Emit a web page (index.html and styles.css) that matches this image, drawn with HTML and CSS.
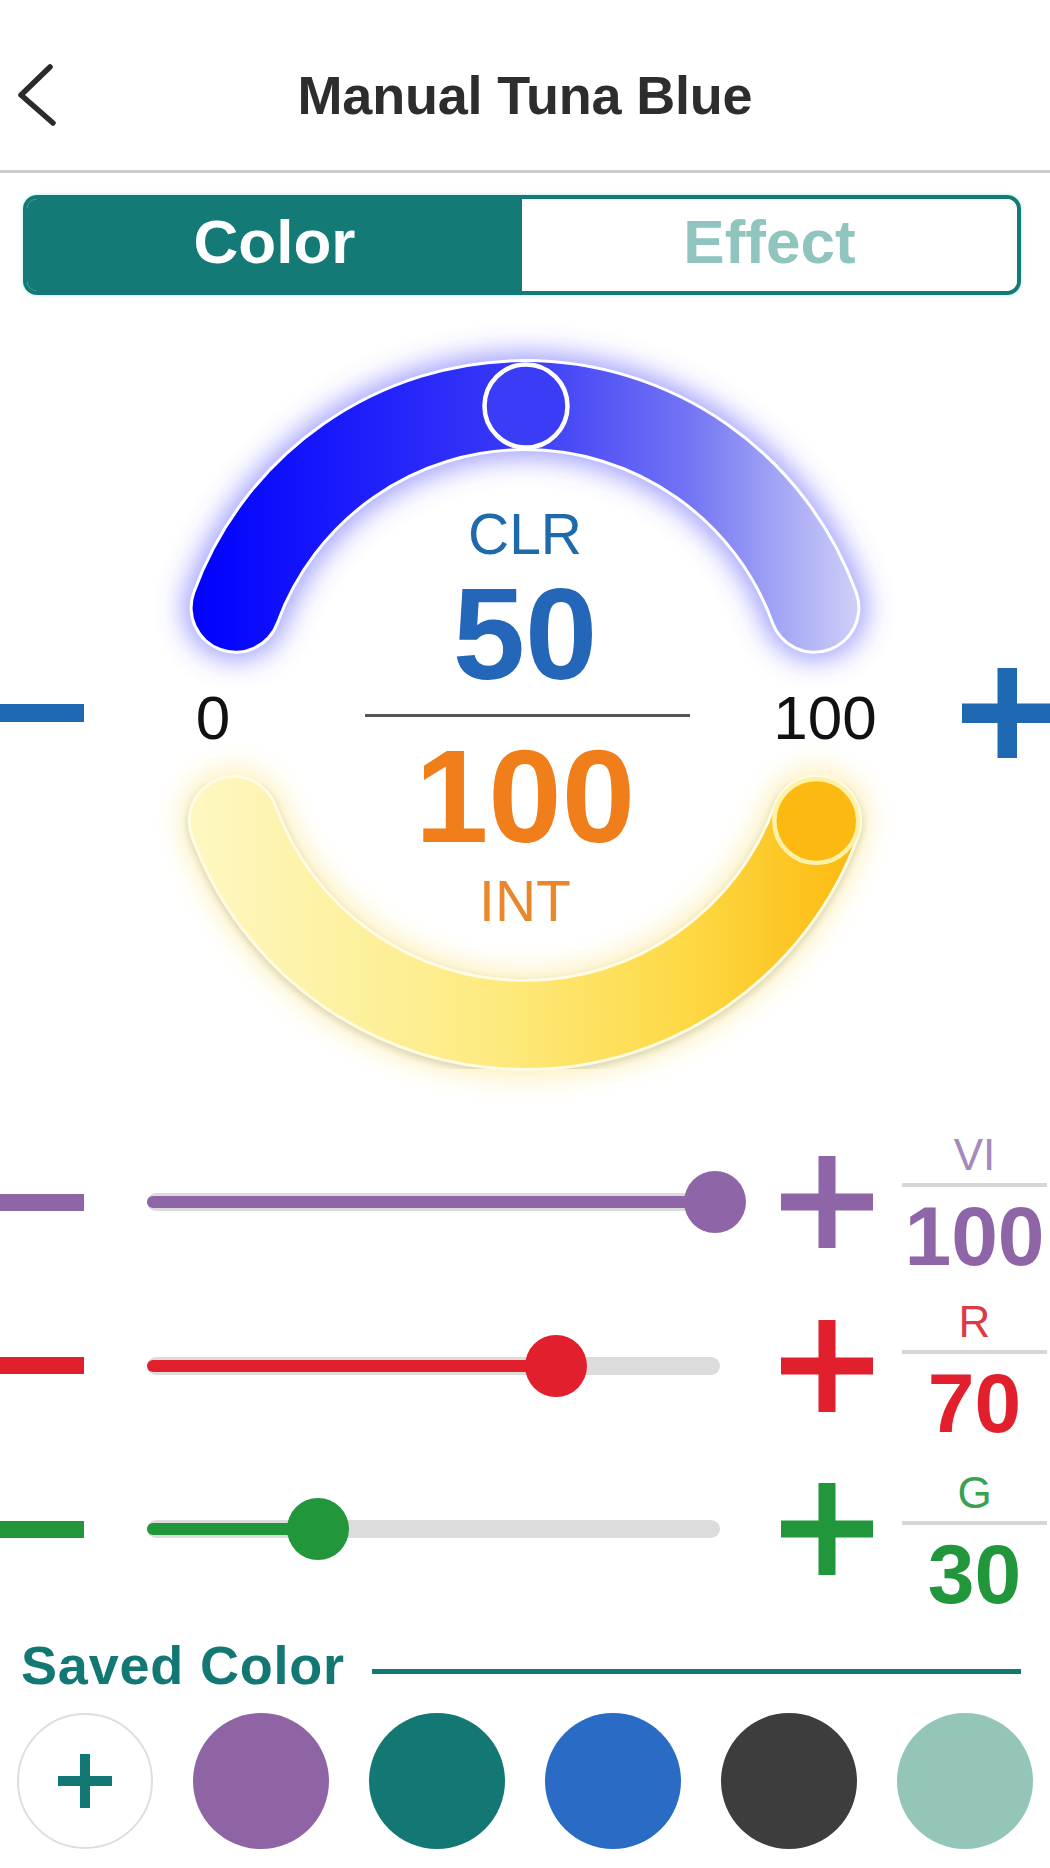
FILE: index.html
```html
<!DOCTYPE html>
<html lang="en">
<head>
<meta charset="utf-8">
<title>Manual Tuna Blue</title>
<link rel="stylesheet" href="styles.css">
</head>
<body>
<div class="screen">
  <header class="topbar">
    <div class="back">
      <svg width="44" height="64" viewBox="0 0 44 64"><polyline points="34,4 5,32 37,60" fill="none" stroke="#2b2b2b" stroke-width="5.5" stroke-linecap="round" stroke-linejoin="round"/></svg>
    </div>
    <h1 class="title">Manual Tuna Blue</h1>
    <div></div>
  </header>

  <div class="segment">
    <div class="seg seg-active">Color</div>
    <div class="seg seg-idle">Effect</div>
  </div>

  <section class="gauge">
    <svg class="arcs" width="1050" height="839" viewBox="0 0 1050 839">
      <defs>
        <linearGradient id="gBlue" gradientUnits="userSpaceOnUse" x1="190" y1="0" x2="860" y2="0">
          <stop offset="0" stop-color="#0000ff"/>
          <stop offset="0.5" stop-color="#3a3bf7"/>
          <stop offset="0.75" stop-color="#7476f4"/>
          <stop offset="1" stop-color="#cfd1f8"/>
        </linearGradient>
        <linearGradient id="gYellow" gradientUnits="userSpaceOnUse" x1="190" y1="0" x2="860" y2="0">
          <stop offset="0" stop-color="#fef7c2"/>
          <stop offset="0.45" stop-color="#fdeb80"/>
          <stop offset="0.75" stop-color="#fdd843"/>
          <stop offset="1" stop-color="#fcb90e"/>
        </linearGradient>
        <filter id="glow" x="-30%" y="-60%" width="160%" height="220%"><feGaussianBlur stdDeviation="14"/></filter>
        <filter id="soft" x="-10%" y="-20%" width="120%" height="140%"><feGaussianBlur stdDeviation="3"/></filter>
      </defs>
      <!-- CLR arc -->
      <path d="M235.6 312.7 A308 308 0 0 1 814.4 312.7" fill="none" stroke="#3c3cff" stroke-width="104" stroke-linecap="round" opacity="0.5" filter="url(#glow)"/>
      <path d="M235.6 312.7 A308 308 0 0 1 814.4 312.7" fill="none" stroke="#ffffff" stroke-width="92" stroke-linecap="round"/>
      <path d="M235.6 312.7 A308 308 0 0 1 814.4 312.7" fill="none" stroke="url(#gBlue)" stroke-width="86" stroke-linecap="round"/>
      <circle cx="526" cy="111" r="41.5" fill="#3b3cf6" stroke="#ffffff" stroke-width="4.5"/>
      <!-- INT arc -->
      <path d="M233.7 526 A310 310 0 0 0 816.3 526" fill="none" stroke="#f9dd5e" stroke-width="104" stroke-linecap="round" opacity="0.45" filter="url(#glow)"/>
      <path d="M233.7 529 A310 310 0 0 0 816.3 529" fill="none" stroke="#a9a58a" stroke-width="94" stroke-linecap="round" opacity="0.35" filter="url(#soft)"/>
      <path d="M233.7 526 A310 310 0 0 0 816.3 526" fill="none" stroke="#fffbe4" stroke-width="92" stroke-linecap="round"/>
      <path d="M233.7 526 A310 310 0 0 0 816.3 526" fill="none" stroke="url(#gYellow)" stroke-width="86" stroke-linecap="round"/>
      <circle cx="816.3" cy="526" r="42" fill="#fcb912" stroke="#fdf2a8" stroke-width="4.5"/>
    </svg>

    <div class="readout">
      <div class="clr-label">CLR</div>
      <div class="clr-value">50</div>
      <div class="range-row">
        <span class="g-minus"></span>
        <span class="range-num range-min">0</span>
        <span class="range-line"></span>
        <span class="range-num range-max">100</span>
        <svg class="g-plus" width="88" height="90" viewBox="0 0 88 90"><rect x="0" y="35.5" width="90" height="19.5"/><rect x="35.5" y="0" width="19.5" height="90"/></svg>
      </div>
      <div class="int-value">100</div>
      <div class="int-label">INT</div>
    </div>
  </section>

  <section class="sliders">
    <div class="slider-row c-purple">
      <span class="s-minus"></span>
      <div class="track"><div class="fill" style="width:99.1%"></div><div class="knob" style="left:99.1%"></div></div>
      <svg class="s-plus" width="92" height="92" viewBox="0 0 92 92"><rect x="0" y="37.5" width="92" height="17"/><rect x="37.5" y="0" width="17" height="92"/></svg>
      <div class="value-col"><div class="v-label">VI</div><div class="v-rule"></div><div class="v-num">100</div></div>
    </div>
    <div class="slider-row c-red">
      <span class="s-minus"></span>
      <div class="track"><div class="fill" style="width:71.4%"></div><div class="knob" style="left:71.4%"></div></div>
      <svg class="s-plus" width="92" height="92" viewBox="0 0 92 92"><rect x="0" y="37.5" width="92" height="17"/><rect x="37.5" y="0" width="17" height="92"/></svg>
      <div class="value-col"><div class="v-label">R</div><div class="v-rule"></div><div class="v-num">70</div></div>
    </div>
    <div class="slider-row c-green">
      <span class="s-minus"></span>
      <div class="track"><div class="fill" style="width:29.8%"></div><div class="knob" style="left:29.8%"></div></div>
      <svg class="s-plus" width="92" height="92" viewBox="0 0 92 92"><rect x="0" y="37.5" width="92" height="17"/><rect x="37.5" y="0" width="17" height="92"/></svg>
      <div class="value-col"><div class="v-label">G</div><div class="v-rule"></div><div class="v-num">30</div></div>
    </div>
  </section>

  <section class="saved">
    <div class="saved-head">
      <h2 class="saved-title">Saved Color</h2>
      <div class="saved-rule"></div>
    </div>
    <div class="swatches">
      <div class="swatch swatch-add">
        <svg width="54" height="54" viewBox="0 0 54 54"><rect x="0" y="22" width="54" height="10" fill="#137873"/><rect x="22" y="0" width="10" height="54" fill="#137873"/></svg>
      </div>
      <div class="swatch sw-purple"></div>
      <div class="swatch sw-teal"></div>
      <div class="swatch sw-blue"></div>
      <div class="swatch sw-dark"></div>
      <div class="swatch sw-mint"></div>
    </div>
  </section>
</div>
</body>
</html>
```

FILE: styles.css
```css
* { box-sizing: border-box; }

html, body {
  margin: 0;
  padding: 0;
  background: #ffffff;
}

body {
  font-family: "Liberation Sans", Arial, sans-serif;
  color: #222;
}

.screen {
  width: 1050px;
  height: 1868px;
  overflow: hidden;
}

/* ---------- header ---------- */
.topbar {
  display: grid;
  grid-template-columns: 1fr auto 1fr;
  align-items: center;
  height: 173px;
  padding-top: 20px;
  border-bottom: 3px solid #cdcdcd;
}

.back {
  padding-left: 16px;
  display: flex;
  align-items: center;
}

.back svg { display: block; }

.title {
  margin: 0;
  font-size: 54px;
  line-height: 54px;
  font-weight: 700;
  color: #2d2d2d;
  letter-spacing: -0.2px;
}

/* ---------- segmented control ---------- */
.segment {
  display: flex;
  margin: 22px 29px 0 23px;
  height: 100px;
  border: 4px solid #147a75;
  border-radius: 14px;
  overflow: hidden;
  box-shadow: 0 0 4px rgba(90, 210, 210, 0.45);
}

.seg {
  flex: 1;
  display: flex;
  align-items: center;
  justify-content: center;
  padding-bottom: 6px;
  font-size: 62px;
  line-height: 62px;
  font-weight: 700;
}

.seg-active {
  background: #147a75;
  color: #ffffff;
}

.seg-idle {
  background: #ffffff;
  color: #8fc4bf;
}

/* ---------- gauge ---------- */
.gauge {
  position: relative;
  padding-bottom: 202px;
}

.arcs {
  position: absolute;
  top: 0;
  left: 0;
  display: block;
}

.readout {
  position: relative;
  display: flex;
  flex-direction: column;
  align-items: center;
  padding-top: 211px;
}

.clr-label {
  font-size: 57px;
  line-height: 57px;
  color: #1f6aaa;
}

.clr-value {
  margin-top: 22px;
  font-size: 130px;
  line-height: 99px;
  font-weight: 700;
  color: #2466b7;
}

.range-row {
  align-self: stretch;
  display: flex;
  align-items: center;
  height: 60px;
  margin-top: -1px;
}

.range-row > * { flex-shrink: 0; }

.g-minus {
  width: 84px;
  height: 18px;
  background: #1f69b3;
}

.range-num {
  padding-top: 10px;
  font-size: 62px;
  line-height: 60px;
  color: #111;
  text-align: center;
}

.range-min {
  width: 80px;
  margin-left: 89px;
}

.range-line {
  width: 325px;
  height: 3px;
  margin-left: 112px;
  margin-top: 4px;
  background: #555555;
}

.range-max {
  width: 140px;
  margin-left: 65px;
}

.g-plus {
  display: block;
  margin-left: 67px;
  fill: #1f69b3;
}

.int-value {
  margin-top: 4px;
  font-size: 132px;
  line-height: 100px;
  font-weight: 700;
  color: #ef7e1b;
}

.int-label {
  margin-top: 26px;
  font-size: 57px;
  line-height: 57px;
  color: #e8872c;
}

/* ---------- sliders ---------- */
.sliders {
  display: flex;
  flex-direction: column;
  gap: 23.5px;
}

.c-purple { --c: #8e65a6; --lc: #a48abd; --shift: 0px; }
.c-red    { --c: #e11f2d; --lc: #dc3a46; --shift: 6px; }
.c-green  { --c: #22963b; --lc: #3aa052; --shift: 22px; }

.slider-row {
  display: flex;
  align-items: center;
  height: 140px;
}

.slider-row > * { flex-shrink: 0; }

.s-minus {
  width: 84px;
  height: 17px;
  background: var(--c);
}

.track {
  position: relative;
  width: 573px;
  height: 18px;
  margin-left: 63px;
  border-radius: 9px;
  background: #dcdcdc;
}

.fill {
  position: absolute;
  left: 0;
  top: 3px;
  height: 12px;
  border-radius: 6px;
  background: var(--c);
}

.knob {
  position: absolute;
  top: 50%;
  width: 62px;
  height: 62px;
  margin: -31px 0 0 -31px;
  border-radius: 50%;
  background: var(--c);
}

.s-plus {
  display: block;
  margin-left: 61px;
  fill: var(--c);
}

.value-col {
  width: 145px;
  margin-left: 29px;
  margin-top: var(--shift);
  display: flex;
  flex-direction: column;
  align-items: center;
}

.v-label {
  font-size: 44px;
  line-height: 44px;
  color: var(--lc);
}

.v-rule {
  align-self: stretch;
  height: 4px;
  margin-top: 6px;
  background: #d6d6d6;
}

.v-num {
  margin-top: 14px;
  font-size: 84px;
  line-height: 70px;
  font-weight: 700;
  color: var(--c);
}

/* ---------- saved colors ---------- */
.saved-head {
  display: grid;
  grid-template-columns: 351px 1fr;
  align-items: center;
  margin: 40px 29px 0 21px;
}

.saved-title {
  margin: 0;
  font-size: 54px;
  line-height: 52px;
  font-weight: 700;
  letter-spacing: 0.8px;
  color: #137873;
  white-space: nowrap;
}

.saved-rule {
  height: 5px;
  margin-top: 12px;
  background: #137873;
}

.swatches {
  display: flex;
  gap: 40px;
  margin: 21.5px 0 0 17px;
}

.swatch {
  width: 136px;
  height: 136px;
  border-radius: 50%;
  flex-shrink: 0;
}

.swatch-add {
  display: flex;
  align-items: center;
  justify-content: center;
  background: #ffffff;
  border: 2px solid #dedede;
}

.swatch-add svg { display: block; }

.sw-purple { background: #8f64a5; }
.sw-teal   { background: #137873; }
.sw-blue   { background: #2a6cc5; }
.sw-dark   { background: #3d3d3d; }
.sw-mint   { background: #93c5b8; }
```
